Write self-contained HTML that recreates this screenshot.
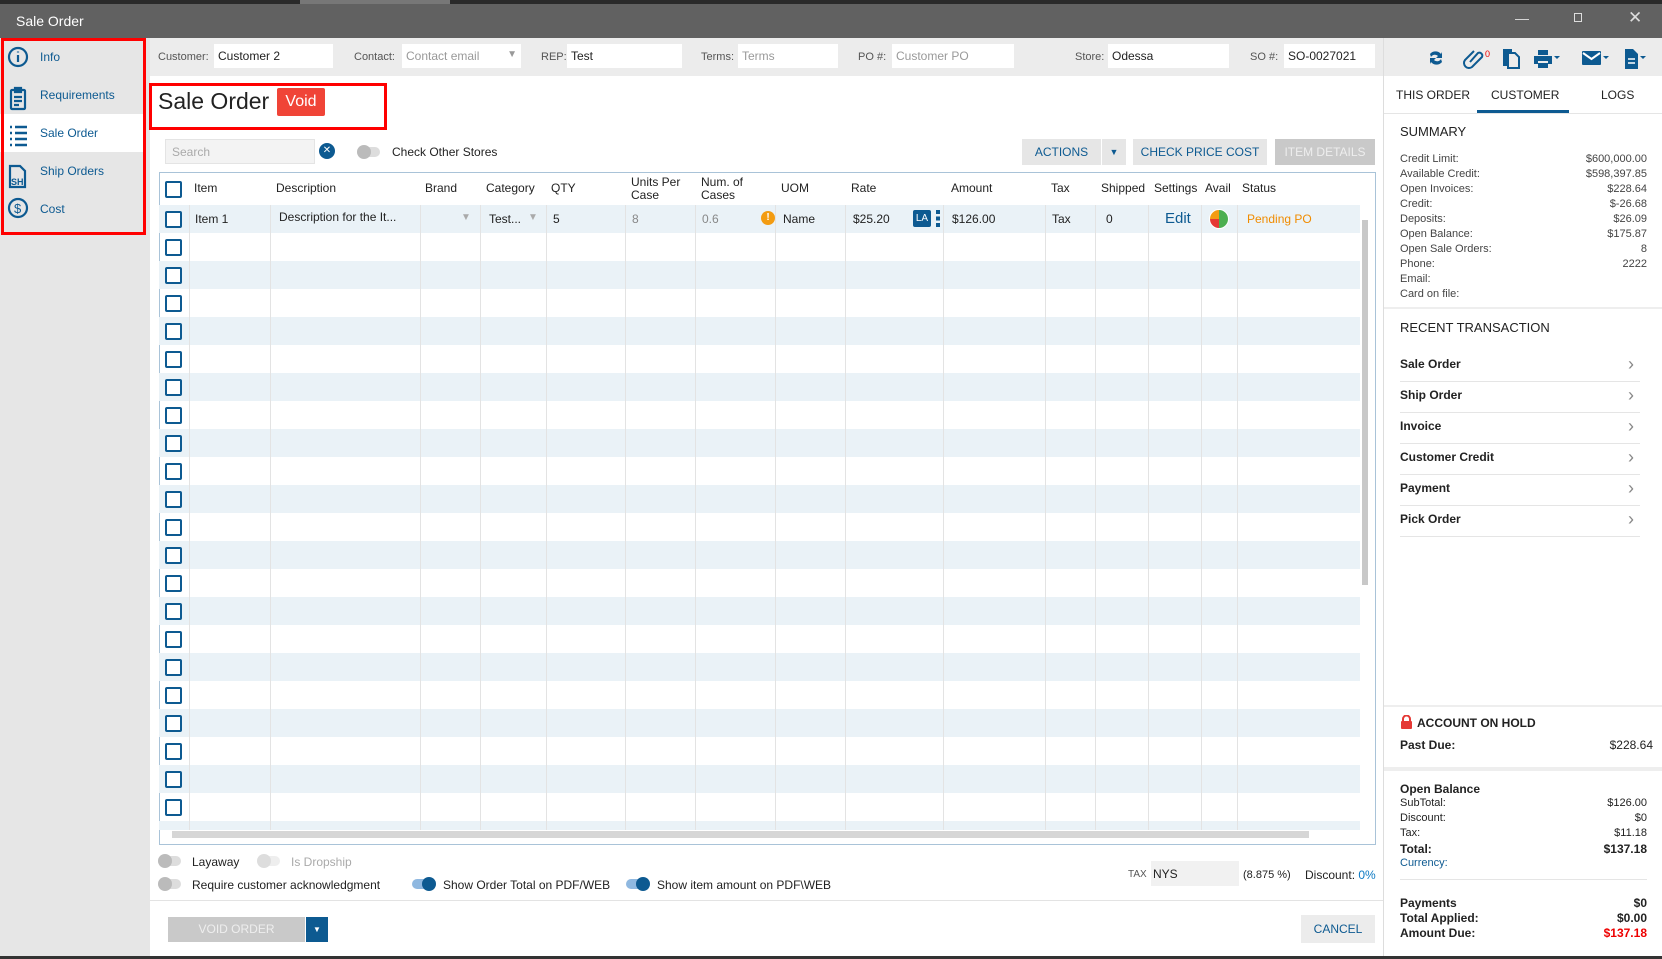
<!DOCTYPE html>
<html><head><meta charset="utf-8"><style>
*{box-sizing:border-box;margin:0;padding:0}
body{width:1662px;height:959px;overflow:hidden;font-family:"Liberation Sans",sans-serif;font-size:12px;color:#222;background:#fff;position:relative}
.a{position:absolute}
.lbl{color:#555;font-size:11px}
.inp{position:absolute;background:#fff;height:24px;top:44px;padding:5px 4px;font-size:12px}
.ph{color:#999}
.nav{position:absolute;left:0;width:144px;height:38px;color:#0d5a91;font-size:12px;padding-left:40px;line-height:38px}
.th{position:absolute;top:181px;font-size:12px;color:#222;line-height:13px}
.cb{position:absolute;left:165px;width:17px;height:17px;border:2px solid #0d5a91;border-radius:2px;background:#fff}
.r{position:absolute;left:159px;width:1201px;height:28px}
.vl{position:absolute;top:205px;width:1px;height:625px;background:#e3e3e3}
.sr{position:absolute;left:1400px;width:247px;font-size:11px;color:#444}
.sr span{float:right}
.rt{position:absolute;left:1400px;width:240px;font-weight:bold;font-size:12px;border-bottom:1px solid #e5e5e5;height:31px;line-height:26px}
.rt:after{content:"\203A";position:absolute;right:6px;color:#888;font-size:18px;font-weight:normal}
.tg{position:absolute;width:22px;height:10px;border-radius:5px;background:#ddd}
.tg i{position:absolute;top:-2px;width:14px;height:14px;border-radius:50%;background:#bbb}
.tg.on{background:#8fb8e0}.tg.on i{background:#0d5a91;right:-2px}
.ob{position:absolute;left:1400px;width:247px;font-size:12px}
.ob span{float:right}
</style></head><body>
<div class="a" style="left:0;top:0;width:1662px;height:4px;background:#2a2a2a"></div>
<div class="a" style="left:300px;top:0;width:150px;height:4px;background:#777"></div>
<div class="a" style="left:0;top:4px;width:1662px;height:34px;background:#616161"></div>
<div class="a" style="left:16px;top:13px;color:#fff;font-size:14px">Sale Order</div>
<div class="a" style="left:1515px;top:10px;color:#ddd;font-size:14px">—</div>
<div class="a" style="left:1574px;top:13px;width:8px;height:9px;border:1px solid #ddd"></div>
<div class="a" style="left:1628px;top:8px;color:#ddd;font-size:17px">✕</div>

<div class="a" style="left:0;top:38px;width:150px;height:921px;background:#e6e6e6"></div>
<div class="nav" style="top:38px">Info</div>
<div class="nav" style="top:76px">Requirements</div>
<div class="nav" style="top:114px;background:#fff">Sale Order</div>
<div class="nav" style="top:152px">Ship Orders</div>
<div class="nav" style="top:190px">Cost</div>
<svg class="a" style="left:6px;top:45px" width="24" height="180" fill="none" stroke="#0d5a91" stroke-width="2.2">
<circle cx="12" cy="12" r="9"/><path d="M12 10v7M12 6.5v1"/>
<rect x="5" y="45" width="14" height="19" rx="1"/><path d="M9 43h6v4H9zM8 52h8M8 56h8M8 60h5"/>
<path d="M4 82h2M9 82h12M4 88h2M9 88h12M4 94h2M9 94h12M4 100h2M9 100h12" stroke-width="2.6"/>
<path d="M4 121h10l5 5v16H4z"/><text x="5" y="140" font-size="9" font-weight="bold" fill="#0d5a91" stroke="none" font-family="Liberation Sans">SH</text>
<circle cx="12" cy="163" r="9"/><text x="8" y="168" font-size="13" fill="#0d5a91" stroke="none" font-family="Liberation Sans">$</text>
</svg>
<div class="a" style="left:1px;top:38px;width:145px;height:197px;border:3px solid #f00"></div>

<div class="a" style="left:150px;top:38px;width:1233px;height:38px;background:#ececec"></div>
<div class="a lbl" style="left:158px;top:51px">Customer:</div><div class="inp" style="left:214px;width:119px">Customer 2</div>
<div class="a lbl" style="left:354px;top:51px">Contact:</div><div class="inp ph" style="left:402px;width:119px">Contact email<span style="float:right;color:#999;font-size:10px">▼</span></div>
<div class="a lbl" style="left:541px;top:51px">REP:</div><div class="inp" style="left:567px;width:115px">Test</div>
<div class="a lbl" style="left:701px;top:51px">Terms:</div><div class="inp ph" style="left:738px;width:100px">Terms</div>
<div class="a lbl" style="left:858px;top:51px">PO #:</div><div class="inp ph" style="left:892px;width:122px">Customer PO</div>
<div class="a lbl" style="left:1075px;top:51px">Store:</div><div class="inp" style="left:1108px;width:121px">Odessa</div>
<div class="a lbl" style="left:1250px;top:51px">SO #:</div><div class="inp" style="left:1284px;width:91px">SO-0027021</div>

<div class="a" style="left:158px;top:88px;font-size:23px;color:#222">Sale Order</div>
<div class="a" style="left:277px;top:88px;width:48px;height:28px;background:#f04437;color:#fff;border-radius:2px;font-size:16px;text-align:center;line-height:28px">Void</div>
<div class="a" style="left:149px;top:83px;width:238px;height:47px;border:3px solid #f00"></div>

<div class="a" style="left:165px;top:139px;width:150px;height:25px;background:#f3f3f3;border:1px solid #e4e4e4;color:#aaa;padding:5px 6px">Search</div>
<div class="a" style="left:319px;top:143px;width:16px;height:16px;border-radius:50%;background:#0d5a91;color:#fff;font-size:10px;text-align:center;line-height:16px">✕</div>
<div class="tg" style="left:358px;top:147px"><i style="left:-1px"></i></div>
<div class="a" style="left:392px;top:145px">Check Other Stores</div>
<div class="a" style="left:1022px;top:139px;width:79px;height:26px;background:#e6e6e6;color:#0d5a91;text-align:center;line-height:26px">ACTIONS</div>
<div class="a" style="left:1102px;top:139px;width:24px;height:26px;background:#e6e6e6;color:#0d5a91;text-align:center;line-height:26px;font-size:9px">▼</div>
<div class="a" style="left:1133px;top:139px;width:134px;height:26px;background:#e6e6e6;color:#0d5a91;text-align:center;line-height:26px">CHECK PRICE COST</div>
<div class="a" style="left:1275px;top:139px;width:100px;height:26px;background:#c9c9c9;color:#eee;text-align:center;line-height:26px">ITEM DETAILS</div>

<div class="a" style="left:159px;top:172px;width:1217px;height:673px;border:1px solid #a9c3d8"></div>
<div class="r" style="top:205px;background:#eaf2f7"></div>
<div class="r" style="top:261px;background:#eaf2f7"></div><div class="r" style="top:317px;background:#eaf2f7"></div>
<div class="r" style="top:373px;background:#eaf2f7"></div><div class="r" style="top:429px;background:#eaf2f7"></div>
<div class="r" style="top:485px;background:#eaf2f7"></div><div class="r" style="top:541px;background:#eaf2f7"></div>
<div class="r" style="top:597px;background:#eaf2f7"></div><div class="r" style="top:653px;background:#eaf2f7"></div>
<div class="r" style="top:709px;background:#eaf2f7"></div><div class="r" style="top:765px;background:#eaf2f7"></div>
<div class="r" style="top:821px;height:9px;background:#eaf2f7"></div>
<div class="vl" style="left:189px"></div><div class="vl" style="left:270px"></div><div class="vl" style="left:420px"></div><div class="vl" style="left:480px"></div><div class="vl" style="left:546px"></div><div class="vl" style="left:625px"></div><div class="vl" style="left:695px"></div><div class="vl" style="left:775px"></div><div class="vl" style="left:845px"></div><div class="vl" style="left:943px"></div><div class="vl" style="left:1045px"></div><div class="vl" style="left:1095px"></div><div class="vl" style="left:1148px"></div><div class="vl" style="left:1201px"></div><div class="vl" style="left:1237px"></div>
<div class="a" style="left:1362px;top:220px;width:6px;height:365px;background:#c8c8c8"></div>
<div class="a" style="left:172px;top:831px;width:1137px;height:7px;background:#d6d6d6"></div>

<div class="cb" style="top:181px"></div>
<div class="th" style="left:194px;top:182px">Item</div><div class="th" style="left:276px;top:182px">Description</div><div class="th" style="left:425px;top:182px">Brand</div><div class="th" style="left:486px;top:182px">Category</div><div class="th" style="left:551px;top:182px">QTY</div><div class="th" style="left:631px;top:176px">Units Per<br>Case</div><div class="th" style="left:701px;top:176px">Num. of<br>Cases</div><div class="th" style="left:781px;top:182px">UOM</div><div class="th" style="left:851px;top:182px">Rate</div><div class="th" style="left:951px;top:182px">Amount</div><div class="th" style="left:1051px;top:182px">Tax</div><div class="th" style="left:1101px;top:182px">Shipped</div><div class="th" style="left:1154px;top:182px">Settings</div><div class="th" style="left:1205px;top:182px">Avail</div><div class="th" style="left:1242px;top:182px">Status</div>

<div class="a" style="left:0;top:212px;width:1400px">
<span class="a" style="left:195px">Item 1</span><span class="a" style="left:279px;top:-2px">Description for the It...</span>
<span class="a" style="left:461px;color:#aaa;font-size:10px">▼</span>
<span class="a" style="left:489px">Test...</span><span class="a" style="left:528px;color:#aaa;font-size:10px">▼</span>
<span class="a" style="left:553px">5</span><span class="a" style="left:632px;color:#888">8</span><span class="a" style="left:702px;color:#888">0.6</span>
<span class="a" style="left:761px;top:-1px;width:14px;height:14px;border-radius:50%;background:#f39c12;color:#fff;font-size:10px;font-weight:bold;text-align:center;line-height:14px">!</span>
<span class="a" style="left:783px">Name</span><span class="a" style="left:853px">$25.20</span>
<span class="a" style="left:913px;top:-2px;width:18px;height:17px;background:#0d5a91;color:#fff;font-size:10px;text-align:center;line-height:17px;border-radius:2px">LA</span>
<span class="a" style="left:936px;top:-2px;width:4px;height:17px;background:repeating-linear-gradient(#0d5a91 0 4px,transparent 4px 6.5px)"></span>
<span class="a" style="left:952px">$126.00</span><span class="a" style="left:1052px">Tax</span><span class="a" style="left:1106px">0</span>
<span class="a" style="left:1165px;top:-2px;color:#0d5a91;font-size:15px">Edit</span>
<span class="a" style="left:1209px;top:-3px;width:20px;height:20px;border-radius:50%;background:conic-gradient(#4caf50 0 50%,#e53935 50% 75%,#f39c12 75%);border:1px solid #fff"></span>
<span class="a" style="left:1247px;color:#f08c00">Pending PO</span>
</div>
<div class="cb" style="top:211px"></div><div class="cb" style="top:239px"></div><div class="cb" style="top:267px"></div><div class="cb" style="top:295px"></div><div class="cb" style="top:323px"></div><div class="cb" style="top:351px"></div><div class="cb" style="top:379px"></div><div class="cb" style="top:407px"></div><div class="cb" style="top:435px"></div><div class="cb" style="top:463px"></div><div class="cb" style="top:491px"></div><div class="cb" style="top:519px"></div><div class="cb" style="top:547px"></div><div class="cb" style="top:575px"></div><div class="cb" style="top:603px"></div><div class="cb" style="top:631px"></div><div class="cb" style="top:659px"></div><div class="cb" style="top:687px"></div><div class="cb" style="top:715px"></div><div class="cb" style="top:743px"></div><div class="cb" style="top:771px"></div><div class="cb" style="top:799px"></div>

<div class="tg" style="left:159px;top:856px"><i style="left:-1px"></i></div><div class="a" style="left:192px;top:855px">Layaway</div>
<div class="tg" style="left:258px;top:856px;background:#eee"><i style="left:-1px;background:#ddd"></i></div><div class="a" style="left:291px;top:855px;color:#aaa">Is Dropship</div>
<div class="tg" style="left:159px;top:879px"><i style="left:-1px"></i></div><div class="a" style="left:192px;top:878px">Require customer acknowledgment</div>
<div class="tg on" style="left:412px;top:879px"><i></i></div><div class="a" style="left:443px;top:878px">Show Order Total on PDF/WEB</div>
<div class="tg on" style="left:626px;top:879px"><i></i></div><div class="a" style="left:657px;top:878px">Show item amount on PDF\WEB</div>
<div class="a" style="left:1128px;top:869px;font-size:10px;color:#555">TAX</div>
<div class="a" style="left:1151px;top:861px;width:88px;height:25px;background:#f1f1f1;padding:6px 2px">NYS</div>
<div class="a" style="left:1243px;top:869px;font-size:11px">(8.875 %)</div>
<div class="a" style="left:1305px;top:868px">Discount: <span style="color:#0d7ac4">0%</span></div>
<div class="a" style="left:150px;top:900px;width:1233px;height:1px;background:#e3e3e3"></div>
<div class="a" style="left:168px;top:917px;width:137px;height:25px;background:#c9c9c9;color:#eee;text-align:center;line-height:25px">VOID ORDER</div>
<div class="a" style="left:306px;top:917px;width:22px;height:25px;background:#0d5a91;color:#fff;font-size:8px;text-align:center;line-height:25px">▼</div>
<div class="a" style="left:1301px;top:915px;width:74px;height:28px;background:#ececec;color:#0d5a91;text-align:center;line-height:28px">CANCEL</div>

<div class="a" style="left:1383px;top:38px;width:1px;height:921px;background:#ddd"></div>
<div class="a" style="left:1384px;top:38px;width:278px;height:38px;background:#ececec"></div>
<svg class="a" style="left:1424px;top:46px" width="235" height="24" fill="#0d5a91">
<path d="M6 8a7 7 0 0 1 11 0l1-2v6h-6l2-2a4.5 4.5 0 0 0-7 1z M18 16a7 7 0 0 1-11 0l-1 2v-6h6l-2 2a4.5 4.5 0 0 0 7-1z"/>
<path d="M46 16l8-9a3 3 0 0 1 4 4l-10 10a5 5 0 0 1-7-7l9-9" fill="none" stroke="#0d5a91" stroke-width="2"/>
<text x="61" y="11" font-size="9" fill="#e00" font-family="Liberation Sans">0</text>
<path d="M80 4h7v2h-5v13h-2z M84 7h7l4 4v11h-11z" fill="none" stroke="#0d5a91" stroke-width="2"/>
<path d="M114 4h10v5h-10z M110 10h18v8h-4v-3h-10v3h-4z M114 17h10v5h-10z"/>
<path d="M130 10h6l-3 3z"/>
<rect x="158" y="5" width="19" height="14" rx="1"/><path d="M159 7l8.5 6 8.5-6" fill="none" stroke="#fff" stroke-width="2"/>
<path d="M179 10h6l-3 3z"/>
<path d="M201 3h8l5 5v15h-13z"/><path d="M204 13h7M204 17h7" stroke="#fff" stroke-width="1.6"/>
<path d="M216 10h6l-3 3z"/>
</svg>
<div class="a" style="left:1396px;top:88px;font-size:12px">THIS ORDER</div>
<div class="a" style="left:1491px;top:88px;font-size:12px">CUSTOMER</div>
<div class="a" style="left:1601px;top:88px;font-size:12px">LOGS</div>
<div class="a" style="left:1477px;top:110px;width:92px;height:3px;background:#0d5a91"></div>
<div class="a" style="left:1384px;top:113px;width:278px;height:1px;background:#e5e5e5"></div>
<div class="a" style="left:1400px;top:124px;font-size:13px">SUMMARY</div>
<div class="sr" style="top:153px">Credit Limit:<span>$600,000.00</span></div>
<div class="sr" style="top:168px">Available Credit:<span>$598,397.85</span></div>
<div class="sr" style="top:183px">Open Invoices:<span>$228.64</span></div>
<div class="sr" style="top:198px">Credit:<span>$-26.68</span></div>
<div class="sr" style="top:213px">Deposits:<span>$26.09</span></div>
<div class="sr" style="top:228px">Open Balance:<span>$175.87</span></div>
<div class="sr" style="top:243px">Open Sale Orders:<span>8</span></div>
<div class="sr" style="top:258px">Phone:<span>2222</span></div>
<div class="sr" style="top:273px">Email:</div>
<div class="sr" style="top:288px">Card on file:</div>
<div class="a" style="left:1384px;top:307px;width:278px;height:2px;background:#eee"></div>
<div class="a" style="left:1400px;top:320px;font-size:13px">RECENT TRANSACTION</div>
<div class="rt" style="top:351px">Sale Order</div>
<div class="rt" style="top:382px">Ship Order</div>
<div class="rt" style="top:413px">Invoice</div>
<div class="rt" style="top:444px">Customer Credit</div>
<div class="rt" style="top:475px">Payment</div>
<div class="rt" style="top:506px">Pick Order</div>
<div class="a" style="left:1384px;top:705px;width:278px;height:2px;background:#eee"></div>
<svg class="a" style="left:1400px;top:715px" width="13" height="14"><path d="M3 6V4a3.5 3.5 0 0 1 7 0v2" fill="none" stroke="#e53935" stroke-width="2"/><rect x="1" y="6" width="11" height="8" rx="1" fill="#e53935"/></svg>
<div class="a" style="left:1417px;top:716px;font-size:12px;font-weight:bold">ACCOUNT ON HOLD</div>
<div class="ob" style="top:738px;font-weight:bold">Past Due:<span style="font-weight:normal;margin-right:-6px">$228.64</span></div>
<div class="a" style="left:1384px;top:767px;width:278px;height:4px;background:#eee"></div>
<div class="ob" style="top:782px;font-weight:bold">Open Balance</div>
<div class="ob" style="top:797px;font-size:11px">SubTotal:<span>$126.00</span></div>
<div class="ob" style="top:812px;font-size:11px">Discount:<span>$0</span></div>
<div class="ob" style="top:827px;font-size:11px">Tax:<span>$11.18</span></div>
<div class="ob" style="top:842px;font-weight:bold">Total:<span>$137.18</span></div>
<div class="ob" style="top:857px;font-size:11px;color:#0d5a91">Currency:</div>
<div class="a" style="left:1400px;top:879px;width:247px;height:1px;background:#e5e5e5"></div>
<div class="ob" style="top:896px;font-weight:bold">Payments<span>$0</span></div>
<div class="ob" style="top:911px;font-weight:bold">Total Applied:<span>$0.00</span></div>
<div class="ob" style="top:926px;font-weight:bold">Amount Due:<span style="color:#e00">$137.18</span></div>
<div class="a" style="left:0;top:956px;width:1662px;height:3px;background:#333"></div>
</body></html>
